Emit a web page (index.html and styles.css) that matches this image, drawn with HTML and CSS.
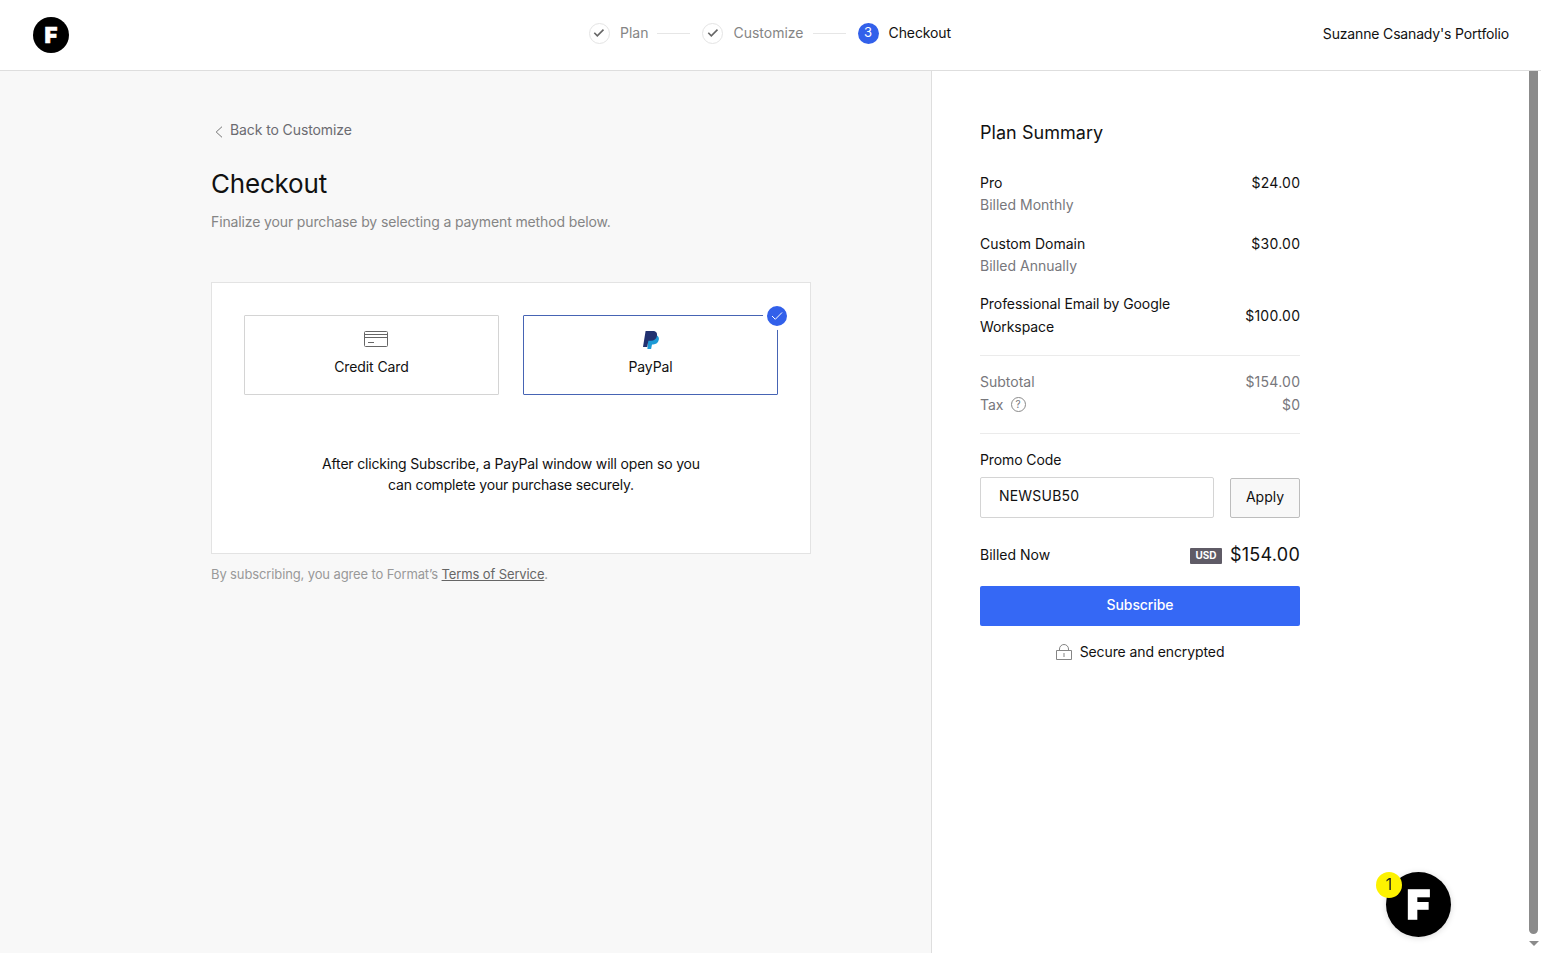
FILE: index.html
```html
<!DOCTYPE html>
<html lang="en">
<head>
    <meta charset="UTF-8">
    <title>Checkout</title>
    <link rel="stylesheet" href="styles.css">
</head>
<body>
    <header class="header">
        <div class="logo">F</div>
        <ol class="steps">
            <li class="step">
                <span class="step-icon"><svg width="12" height="10" viewBox="0 0 12 10"><path d="M1.3 4.8l3 3L10.5 1.6"/></svg></span>
                <span>Plan</span>
            </li>
            <li class="step-line"></li>
            <li class="step">
                <span class="step-icon"><svg width="12" height="10" viewBox="0 0 12 10"><path d="M1.3 4.8l3 3L10.5 1.6"/></svg></span>
                <span>Customize</span>
            </li>
            <li class="step-line"></li>
            <li class="step current">
                <span class="step-icon">3</span>
                <span>Checkout</span>
            </li>
        </ol>
        <div class="site-name">Suzanne Csanady's Portfolio</div>
    </header>

    <div class="page">
        <main class="main">
            <a class="back">
                <svg width="8" height="12" viewBox="0 0 8 12"><path d="M7 .7L1.2 6 7 11.3"/></svg>
                <span>Back to Customize</span>
            </a>
            <h1>Checkout</h1>
            <p class="intro">Finalize your purchase by selecting a payment method below.</p>

            <div class="card">
                <div class="methods">
                    <div class="method">
                        <svg class="method-icon" width="24" height="20" viewBox="0 0 24 20" fill="none" stroke="#666">
                            <rect x=".5" y="2.5" width="23" height="15" rx="1"/>
                            <path d="M.5 5.5h23M.5 8.5h23M4 13.5h6"/>
                        </svg>
                        <span>Credit Card</span>
                    </div>
                    <div class="method selected">
                        <svg class="method-icon" width="16" height="20" viewBox="0 0 16 20">
                            <path fill="#1d9ad6" d="M5.5 6.5h8.6c1.5 1 2.1 2.5 1.7 4.3-.6 3.1-2.6 4.6-5.6 4.6H9l-.9 4.6H4.4z"/>
                            <path fill="#213170" d="M2.6 2h7c3.4 0 4.9 1.7 4.4 4.7-.6 3.5-2.900 5.1-6.3 5.1H5.400L4.200 18H0z"/>
                        </svg>
                        <span>PayPal</span>
                        <i class="badge"><svg width="12" height="10" viewBox="0 0 12 10"><path d="M1 5l3.3 3.3L11 1.5"/></svg></i>
                    </div>
                </div>
                <p class="note">After clicking Subscribe, a PayPal window will open so you<br>can complete your purchase securely.</p>
            </div>
            <p class="terms">By subscribing, you agree to Format’s <a>Terms of Service</a>.</p>
        </main>

        <aside class="summary">
            <h2>Plan Summary</h2>
            <div class="item">
                <div>Pro<br><span class="muted">Billed Monthly</span></div>
                <div class="price">$24.00</div>
            </div>
            <div class="item">
                <div>Custom Domain<br><span class="muted">Billed Annually</span></div>
                <div class="price">$30.00</div>
            </div>
            <div class="item middle">
                <div>Professional Email by Google<br>Workspace</div>
                <div class="price">$100.00</div>
            </div>

            <div class="totals muted">
                <div class="row"><span>Subtotal</span><span class="price">$154.00</span></div>
                <div class="row"><span class="tax">Tax <i class="help">?</i></span><span class="price">$0</span></div>
            </div>

            <label class="promo-label" for="promo">Promo Code</label>
            <div class="promo">
                <input id="promo" type="text" value="NEWSUB50">
                <button class="apply">Apply</button>
            </div>

            <div class="billed">
                <span>Billed Now</span>
                <span class="currency">USD</span>
                <span class="amount">$154.00</span>
            </div>
            <button class="subscribe">Subscribe</button>
            <div class="secure">
                <svg width="16" height="16" viewBox="0 0 16 16"><path d="M.5 6.5h15v9H.5zM3.5 6.5V5a4.5 4.5 0 0 1 9 0v1.5M8 9v4"/></svg>
                <span>Secure and encrypted</span>
            </div>
        </aside>

        <div class="scrollbar">
            <div class="thumb"></div>
            <div class="arrow"></div>
        </div>
    </div>

    <div class="chat">F<span class="chat-count">1</span></div>
</body>
</html>
```

FILE: styles.css
```css
* {
    box-sizing: border-box;
}
body {
    margin: 0;
    height: 953px;
    overflow: hidden;
    font-family: Inter, "Liberation Sans", sans-serif;
    font-size: 14px;
    line-height: 22px;
    color: #111;
    background: #fff;
}
h1, h2, p, ol {
    margin: 0;
    padding: 0;
    font-weight: 400;
}
button, input {
    font: inherit;
    color: inherit;
}
svg {
    display: block;
    flex: none;
}

/* Header */
.header {
    height: 71px;
    display: grid;
    grid-template-columns: 1fr auto 1fr;
    align-items: center;
    padding: 0 32px 0 33px;
    border-bottom: 1px solid #dedede;
}
.logo {
    width: 36px;
    height: 36px;
    border-radius: 50%;
    background: #000;
    color: #fff;
    font-size: 22px;
    font-weight: 900;
    line-height: 36px;
    text-align: center;
    -webkit-text-stroke: .6px #fff;
}
.steps {
    display: flex;
    align-items: center;
    list-style: none;
    color: #858585;
    margin: -4px 2px 0 0;
}
.step {
    display: flex;
    align-items: center;
    gap: 10px;
}
.step-icon {
    width: 21px;
    height: 21px;
    border: 1px solid #e4e4e4;
    border-radius: 50%;
    display: flex;
    align-items: center;
    justify-content: center;
}
.step-icon path {
    fill: none;
    stroke: #666;
    stroke-width: 1.6;
}
.step-line {
    width: 33px;
    height: 1px;
    margin: 0 12px 0 9px;
    background: #e6e6e6;
}
.current {
    color: #111;
    letter-spacing: -.1px;
}
.current .step-icon {
    border: 0;
    background: #3260ea;
    color: #fff;
    font-size: 13px;
    padding-bottom: 2px;
}
.site-name {
    text-align: right;
    margin-top: -2px;
    letter-spacing: -.16px;
}

.page {
    display: flex;
    height: 882px;
}

/* Left side */
.main {
    width: 931px;
    padding: 48px 120px 0 211px;
    background: #f8f8f8;
}
.back {
    display: flex;
    align-items: center;
    gap: 7px;
    padding-left: 4px;
    color: #6b6b70;
    letter-spacing: -.1px;
}
.back svg {
    margin-top: 3px;
}
.back path {
    fill: none;
    stroke: #777;
}
h1 {
    margin-top: 27px;
    font-size: 26px;
    line-height: 32px;
    letter-spacing: -.2px;
}
.intro {
    margin-top: 11px;
    color: #858585;
    letter-spacing: -.13px;
}
.card {
    width: 600px;
    height: 272px;
    margin-top: 49px;
    padding: 32px;
    background: #fff;
    border: 1px solid #e3e3e3;
}
.methods {
    display: flex;
    gap: 24px;
}
.method {
    position: relative;
    width: 255px;
    height: 80px;
    padding-top: 13px;
    display: flex;
    flex-direction: column;
    align-items: center;
    gap: 7px;
    border: 1px solid #d4d4d4;
    border-radius: 1px;
    letter-spacing: -.1px;
}
.method.selected {
    border-color: #4664b4;
}
.method-icon {
    margin-left: 8px;
}
.selected .method-icon {
    margin-left: 0;
}
.badge {
    position: absolute;
    top: -14px;
    right: -14px;
    width: 28px;
    height: 28px;
    border: 4px solid #fff;
    border-radius: 50%;
    background: #3260ea;
    display: flex;
    align-items: center;
    justify-content: center;
}
.badge path {
    fill: none;
    stroke: #fff;
}
.note {
    margin-top: 58px;
    line-height: 21px;
    text-align: center;
    letter-spacing: -.18px;
}
.terms {
    margin-top: 9px;
    font-size: 13px;
    color: #999;
    letter-spacing: -.12px;
}
.terms a {
    color: #666;
    text-decoration: underline;
}

/* Plan summary */
.summary {
    flex: 1;
    padding: 49px 229px 0 48px;
    border-left: 1px solid #dedede;
    line-height: 22.5px;
}
h2 {
    font-size: 18px;
    line-height: 26px;
    margin-bottom: 26px;
    letter-spacing: .05px;
}
.item, .row {
    display: flex;
    justify-content: space-between;
}
.item {
    line-height: 22px;
    margin-bottom: 17px;
}
.price {
    letter-spacing: .25px;
    margin-right: -.25px;
}
.middle {
    align-items: center;
    line-height: 23px;
    letter-spacing: -.07px;
    margin: -2px 0 17px;
}
.muted {
    color: #77777c;
}
.totals {
    height: 79px;
    padding-top: 15px;
    border-top: 1px solid #ebebeb;
    border-bottom: 1px solid #ebebeb;
}
.tax {
    display: flex;
    align-items: center;
    gap: 7px;
}
.help {
    width: 15px;
    height: 15px;
    border: 1px solid #8a8a8a;
    border-radius: 50%;
    font-size: 10px;
    font-style: normal;
    line-height: 13px;
    text-align: center;
}
.promo-label {
    display: block;
    margin-top: 15px;
    line-height: 22px;
    letter-spacing: -.1px;
}
.promo {
    display: flex;
    align-items: flex-end;
    gap: 16px;
    margin-top: 6px;
}
.promo input {
    width: 234px;
    height: 41px;
    padding: 0 18px 4px;
    border: 1px solid #d4d4d4;
    border-radius: 2px;
    outline: none;
    letter-spacing: .2px;
}
.apply {
    width: 70px;
    height: 40px;
    padding: 0 0 2px;
    background: #f8f8f8;
    border: 1px solid #bdbdbd;
    border-radius: 2px;
}
.billed {
    display: flex;
    align-items: center;
    height: 26px;
    margin-top: 24px;
}
.currency {
    width: 32px;
    height: 16px;
    margin: 2px 8px 0 auto;
    background: #5f5b66;
    color: #fff;
    font-size: 10px;
    font-weight: 700;
    line-height: 15px;
    text-align: center;
    border-radius: 1px;
}
.amount {
    font-size: 18px;
    letter-spacing: .25px;
}
.subscribe {
    width: 320px;
    height: 40px;
    margin-top: 18px;
    padding: 0 0 2px;
    border: 0;
    border-radius: 2px;
    background: #3568f5;
    color: #fff;
    font-weight: 500;
    letter-spacing: -.1px;
}
.secure {
    display: flex;
    align-items: center;
    justify-content: center;
    gap: 8px;
    margin-top: 15px;
    letter-spacing: -.1px;
}
.secure path {
    fill: none;
    stroke: #858585;
}

/* Scrollbar */
.scrollbar {
    width: 12px;
}
.thumb {
    width: 9px;
    height: 863px;
    background: #8b8b8b;
    border-radius: 0 0 5px 5px;
}
.arrow {
    width: 0;
    margin-top: 7px;
    border: 5px solid transparent;
    border-top-color: #8b8b8b;
    border-bottom: 0;
}

/* Chat button */
.chat {
    position: fixed;
    left: 1386px;
    top: 872px;
    width: 65px;
    height: 65px;
    border-radius: 50%;
    background: #000;
    color: #fff;
    font-size: 40px;
    font-weight: 900;
    line-height: 65px;
    text-align: center;
    -webkit-text-stroke: 1.5px #fff;
    box-shadow: 0 1px 6px rgba(0,0,0,0.15);
}
.chat-count {
    position: absolute;
    left: -10px;
    top: 0;
    width: 26px;
    height: 26px;
    border-radius: 50%;
    background: #fdf200;
    color: #222;
    font-size: 16px;
    font-weight: 400;
    line-height: 24px;
    -webkit-text-stroke: 0;
}
```
